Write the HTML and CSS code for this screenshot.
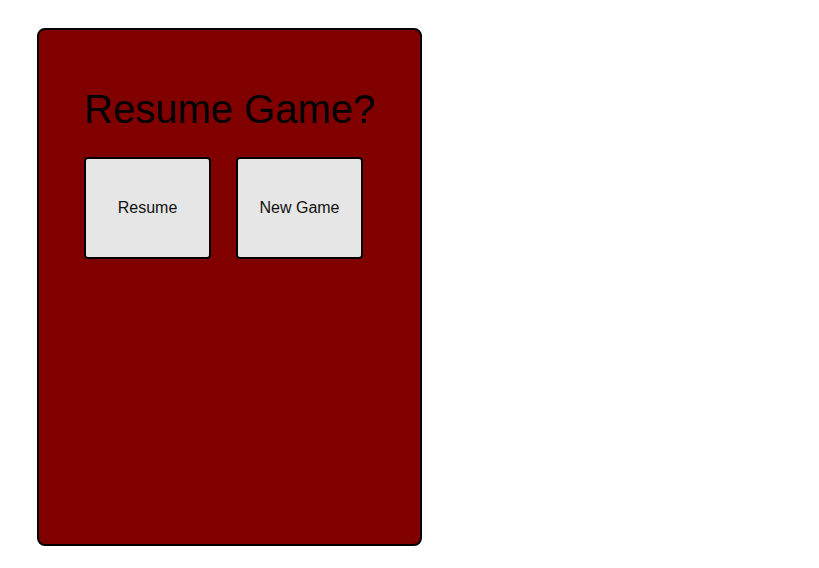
FILE: index.html
```html
<!DOCTYPE html>
<html>
<head>
<meta charset="utf-8">
<link rel="stylesheet" href="styles.css">
</head>
<body>
<div class="panel">
  <h1 class="title">Resume Game?</h1>
  <div class="actions">
    <button class="btn">Resume</button>
    <button class="btn">New Game</button>
  </div>
</div>
</body>
</html>
```

FILE: styles.css
```css
html, body {
  margin: 0;
  padding: 0;
  background: #ffffff;
}
body {
  padding: 28px 0 0 37px;
  font-family: "Liberation Sans", Arial, sans-serif;
}
.panel {
  box-sizing: border-box;
  width: 385px;
  height: 518px;
  background: #800000;
  border: 2px solid #000;
  border-radius: 8px;
  padding: 56px 40px 0 45px;
}
.title {
  margin: 0;
  font-size: 40px;
  font-weight: normal;
  line-height: 46px;
  color: #000;
  white-space: nowrap;
}
.actions {
  display: flex;
  gap: 25px;
  margin-top: 25px;
}
.btn {
  box-sizing: border-box;
  width: 127px;
  height: 102px;
  background: #e6e6e6;
  border: 2px solid #000;
  border-radius: 4px;
  font-family: "Liberation Sans", Arial, sans-serif;
  font-size: 16px;
  color: #111;
  padding: 0;
}
```
